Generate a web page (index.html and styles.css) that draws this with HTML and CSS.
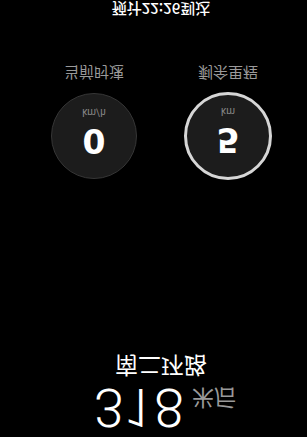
FILE: index.html
```html
<!DOCTYPE html>
<html lang="zh">
<head>
<meta charset="utf-8">
<link rel="stylesheet" href="styles.css">
</head>
<body>
<div class="screen">
  <div class="total flip">预计22:26到达</div>
  <div class="stats">
    <div class="stat">
      <div class="label flip">当前时速</div>
      <div class="dial">
        <div class="unit flip">km/h</div>
        <div class="value flip">0</div>
      </div>
    </div>
    <div class="stat">
      <div class="label flip">剩余里程</div>
      <div class="dial active">
        <div class="unit flip">km</div>
        <div class="value flip">5</div>
      </div>
    </div>
  </div>
  <div class="road flip">南二环路</div>
  <div class="dist flip"><span class="num">318</span><span class="dunit">米后</span></div>
</div>
</body>
</html>
```
FILE: styles.css
```css
html, body {
  margin: 0;
  padding: 0;
  background: #000;
}
body {
  font-family: "Noto Sans CJK SC", "Noto Sans", sans-serif;
  color: #fff;
}
.screen {
  width: 307px;
  height: 437px;
  box-sizing: border-box;
  padding-left: 15px;
  display: flex;
  flex-direction: column;
  align-items: center;
  overflow: hidden;
}
.flip {
  transform: scaleY(-1);
}
.total {
  margin-top: 0;
  font-size: 15px;
  line-height: 18px;
  font-weight: 500;
  color: #fff;
}
.stats {
  display: flex;
  gap: 24px;
  margin-top: 46px;
}
.stat {
  width: 110px;
  display: flex;
  flex-direction: column;
  align-items: center;
}
.label {
  font-size: 15px;
  line-height: 18px;
  color: #9a9a9a;
}
.dial {
  margin-top: 11px;
  width: 86px;
  height: 86px;
  box-sizing: border-box;
  border-radius: 50%;
  background: #1c1c1c;
  border: 1px solid #363636;
  display: flex;
  flex-direction: column;
  align-items: center;
}
.dial.active {
  width: 88px;
  height: 88px;
  margin-top: 10px;
  border: 3px solid #d6d6d6;
}
.unit {
  margin-top: 12px;
  font-family: "Roboto", sans-serif;
  font-size: 10px;
  line-height: 12px;
  color: #8a8a8a;
}
.value {
  margin-top: 4px;
  font-family: "DejaVu Sans", sans-serif;
  font-weight: 700;
  font-size: 33px;
  line-height: 36px;
  color: #fff;
}
.active .unit { margin-top: 10px; }
.road {
  margin-top: auto;
  font-size: 23px;
  line-height: 28px;
  color: #fff;
}
.dist {
  margin-top: 2px;
  margin-bottom: 6px;
  padding-left: 8px;
  display: flex;
  align-items: flex-start;
  gap: 8px;
  height: 48px;
  line-height: 48px;
}
.num {
  font-family: "Roboto", sans-serif;
  font-weight: 300;
  font-size: 54px;
  color: #fff;
}
.dunit {
  align-self: flex-end;
  margin-bottom: 4px;
  font-size: 22px;
  line-height: 26px;
  color: #9a9a9a;
}
```
